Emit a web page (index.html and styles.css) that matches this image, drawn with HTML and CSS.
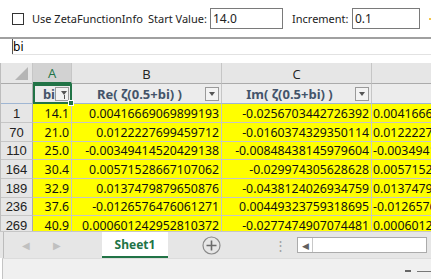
FILE: index.html
```html
<!DOCTYPE html>
<html lang="en">

<head>
    <meta charset="UTF-8">
    <title>Zeta zeros</title>
    <link rel="stylesheet" href="styles.css">
</head>

<body>

    <div class="app">

        <div class="options">
            <span class="checkbox"></span>
            <span class="check-label">Use ZetaFunctionInfo</span>
            <span class="label label-start">Start Value:</span>
            <span class="field field-start">14.0</span>
            <span class="label label-inc">Increment:</span>
            <span class="field field-inc">0.1</span>
            <span class="peek"></span>
        </div>

        <div class="query">bi</div>

        <div class="sheet">
            <!-- column letters -->
            <div class="colhead corner"><span class="tri"></span></div>
            <div class="colhead sel">A</div>
            <div class="colhead">B</div>
            <div class="colhead">C</div>
            <div class="colhead"></div>

            <!-- table header row -->
            <div class="rowhead blank"></div>
            <div class="th active">bi<span class="drop filtered"></span><span class="handle"></span></div>
            <div class="th">Re( ζ(0.5+bi) )<span class="drop"></span></div>
            <div class="th">Im( ζ(0.5+bi) )<span class="drop"></span></div>
            <div class="th"></div>

            <div class="rowhead">1</div>
            <div class="cell">14.1</div>
            <div class="cell">0.00416669069899193</div>
            <div class="cell">-0.0256703442726392</div>
            <div class="cell left">0.00416669069899193</div>

            <div class="rowhead">70</div>
            <div class="cell">21.0</div>
            <div class="cell">0.0122227699459712</div>
            <div class="cell">-0.0160374329350114</div>
            <div class="cell left">0.0122227699459712</div>

            <div class="rowhead">110</div>
            <div class="cell">25.0</div>
            <div class="cell">-0.00349414520429138</div>
            <div class="cell">-0.00848438145979604</div>
            <div class="cell left">-0.00349414520429138</div>

            <div class="rowhead">164</div>
            <div class="cell">30.4</div>
            <div class="cell">0.00571528667107062</div>
            <div class="cell">-0.029974305628628</div>
            <div class="cell left">0.00571528667107062</div>

            <div class="rowhead">189</div>
            <div class="cell">32.9</div>
            <div class="cell">0.0137479879650876</div>
            <div class="cell">-0.0438124026934759</div>
            <div class="cell left">0.0137479879650876</div>

            <div class="rowhead">236</div>
            <div class="cell">37.6</div>
            <div class="cell">-0.0126576476061271</div>
            <div class="cell">0.00449323759318695</div>
            <div class="cell left">-0.0126576476061271</div>

            <div class="rowhead">269</div>
            <div class="cell">40.9</div>
            <div class="cell">0.000601242952810372</div>
            <div class="cell">-0.0277474907074481</div>
            <div class="cell left">0.000601242952810372</div>
        </div>

        <div class="tabs">
            <div class="tab-nav">
                <span class="arrow">&#9664;</span>
                <span class="arrow">&#9654;</span>
            </div>
            <div class="tab">Sheet1</div>
            <div class="add-sheet">
                <svg width="19" height="19" viewBox="0 0 19 19">
                    <circle cx="9.5" cy="9.5" r="8.5" fill="none" stroke="#8a8a8a" stroke-width="1.2" />
                    <path d="M9.5 4.5v10M4.5 9.5h10" stroke="#6a6a6a" stroke-width="1.6" />
                </svg>
            </div>
            <div class="splitter">&#8942;</div>
            <div class="hscroll">
                <span class="hscroll-btn">&#9664;</span>
            </div>
        </div>

        <div class="status">
            <span class="zoom-minus"></span>
            <span class="zoom-track"></span>
        </div>

    </div>

</body>

</html>
```

FILE: styles.css
```css
:root {
    --grid-line: #c6c6c6;
    --head-bg: #e6e6e6;
    --excel-green: #217346;
}

body {
    background-color: white;
    font-family: 'Noto Sans', Arial, sans-serif;
    margin: 0;
}

.app {
    height: 279px;
    overflow: hidden;
    width: 431px;
}

/* ====== OPTIONS BAR ====== */

.options {
    align-items: center;
    color: #222;
    display: flex;
    font-size: 11px;
    height: 37px;
    padding-left: 12px;
    white-space: nowrap;
}

.options > span {
    flex-shrink: 0;
}

.checkbox {
    border: 1px solid #333;
    box-sizing: border-box;
    height: 12px;
    margin-right: 8px;
    width: 12px;
}

.check-label {
    width: 116px;
}

.label-start {
    width: 62px;
}

.label-inc {
    width: 60px;
}

.field {
    border: 1px solid #7a7a7a;
    box-sizing: border-box;
    font-size: 12px;
    height: 21px;
    line-height: 19px;
    padding-left: 2px;
    width: 73px;
}

.field-start {
    margin-right: 9px;
}

.field-inc {
    width: 68px;
}

.peek {
    background-color: #f5c54a;
    height: 2px;
    margin-left: 9px;
    width: 4px;
}

.query {
    border-top: 2px solid #a0a0a0;
    box-sizing: border-box;
    font-size: 12px;
    height: 18px;
    line-height: 15px;
    margin-bottom: 8px;
    padding-left: 13px;
    position: relative;
}

.query::before {
    background-color: #555;
    bottom: 1px;
    content: "";
    left: 12px;
    position: absolute;
    top: 0;
    width: 1px;
}

.query::after {
    background-color: #e2e2e2;
    bottom: 0;
    content: "";
    height: 1px;
    left: 12px;
    position: absolute;
    right: 0;
}

/* ====== SHEET ====== */

.sheet {
    border-left: 1px solid #bdbdbd;
    display: grid;
    grid-template-columns: 32px 39px 150px 150px 150px;
    grid-template-rows: 21px 20px 19px 19px 18px 19px 19px 18px 19px;
    height: 168px;
    overflow: hidden;
}

.sheet > div {
    align-items: center;
    border-bottom: 1px solid var(--grid-line);
    border-right: 1px solid var(--grid-line);
    box-sizing: border-box;
    display: flex;
    overflow: hidden;
    white-space: nowrap;
}

.colhead {
    background-color: var(--head-bg);
    border-bottom-color: #ababab !important;
    color: #222;
    font-family: 'Open Sans', Arial, sans-serif;
    font-size: 13px;
    justify-content: center;
    padding-top: 1px;
}

.colhead.sel {
    background-color: #d2d2d2;
    border-bottom: 2px solid var(--excel-green) !important;
    color: var(--excel-green);
}

.corner {
    position: relative;
}

.tri {
    border-bottom: 13px solid #b5b5b5;
    border-left: 13px solid transparent;
    bottom: 3px;
    position: absolute;
    right: 4px;
}

.rowhead {
    background-color: var(--head-bg);
    border-right-color: #ababab !important;
    color: #222;
    font-family: 'Liberation Sans', Arial, sans-serif;
    font-size: 13px;
    justify-content: center;
}

.rowhead.blank {
    border-bottom-color: #9fb6d3;
}

.th {
    background-color: #ececec;
    border-bottom-color: #9fb6d3 !important;
    color: #44546a;
    font-size: 13px;
    font-weight: 700;
    justify-content: center;
    padding-right: 14px;
    position: relative;
}

.th.active {
    justify-content: flex-end;
    outline: 2px solid var(--excel-green);
    outline-offset: -2px;
    overflow: visible;
    padding-right: 16px;
    z-index: 2;
}

.drop {
    background-color: #f3f3f3;
    border: 1px solid #9a9a9a;
    box-sizing: border-box;
    height: 14px;
    position: absolute;
    right: 2px;
    top: 3px;
    width: 14px;
}

.drop::after {
    border-left: 3px solid transparent;
    border-right: 3px solid transparent;
    border-top: 4px solid #555;
    content: "";
    left: 3px;
    position: absolute;
    top: 4px;
}

.drop.filtered::before {
    background-color: #555;
    content: "";
    height: 4px;
    left: 8px;
    position: absolute;
    top: 7px;
    width: 1px;
}

.drop.filtered::after {
    border-left-width: 3px;
    border-right-width: 3px;
    left: 5px;
    top: 3px;
}

.handle {
    background-color: var(--excel-green);
    border: 1px solid white;
    bottom: -3px;
    height: 4px;
    position: absolute;
    right: -3px;
    width: 4px;
}

.cell {
    background-color: #ffff00;
    color: #111;
    font-size: 12.3px;
    justify-content: flex-end;
    padding-right: 2px;
}

.cell.left {
    justify-content: flex-start;
    padding-left: 1px;
}

/* ====== SHEET TABS ====== */

.tabs {
    align-items: stretch;
    background-color: #e6e6e6;
    border-top: 1px solid #c6c6c6;
    box-sizing: border-box;
    display: flex;
    height: 27px;
}

.tab-nav {
    align-items: center;
    border-left: 1px solid #bcbcbc;
    color: #c0c0c0;
    display: flex;
    font-size: 10px;
    gap: 23px;
    margin-left: 3px;
    padding-left: 18px;
    width: 80px;
}

.tab {
    align-items: center;
    background-color: white;
    border-bottom: 2px solid var(--excel-green);
    color: var(--excel-green);
    display: flex;
    font-size: 12px;
    font-weight: 700;
    justify-content: center;
    width: 66px;
}

.add-sheet {
    align-items: center;
    display: flex;
    margin-left: 34px;
    margin-top: 1px;
}

.splitter {
    align-items: center;
    color: #a0a0a0;
    display: flex;
    font-size: 13px;
    margin-left: 53px;
}

.hscroll {
    align-self: center;
    background-color: white;
    border: 1px solid #ababab;
    box-sizing: border-box;
    display: flex;
    height: 16px;
    margin-left: 10px;
    width: 130px;
}

.hscroll-btn {
    align-items: center;
    border-right: 1px solid #c8c8c8;
    color: #606060;
    display: flex;
    font-size: 9px;
    justify-content: center;
    width: 14px;
}

/* ====== STATUS BAR ====== */

.status {
    align-items: center;
    background-color: #f0f0f0;
    border-left: 1px solid #c4c4c4;
    border-top: 1px solid #dcdcdc;
    box-sizing: border-box;
    display: flex;
    height: 21px;
    justify-content: flex-end;
    margin-left: 2px;
    padding-top: 4px;
}

.zoom-minus {
    background-color: #666;
    height: 2px;
    margin-right: 6px;
    width: 6px;
}

.zoom-track {
    background-color: #777;
    height: 1px;
    width: 14px;
}
```
